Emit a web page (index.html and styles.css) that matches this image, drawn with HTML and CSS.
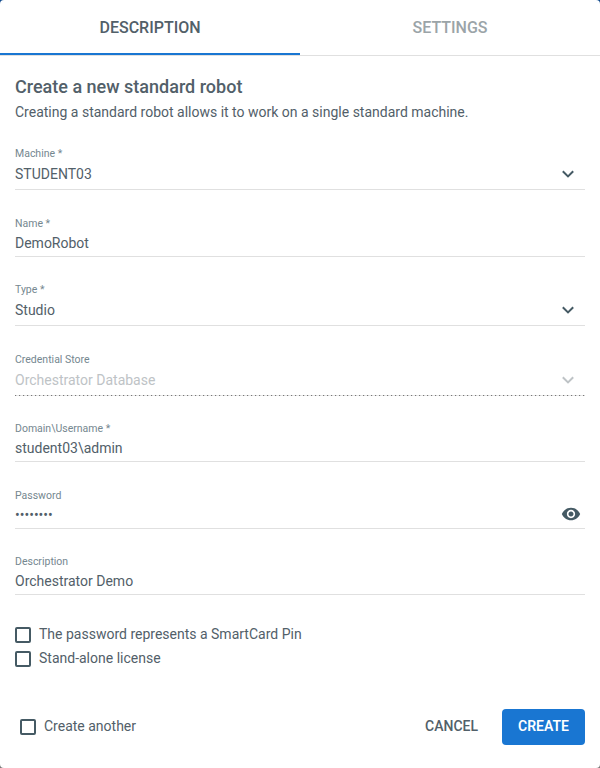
FILE: index.html
```html
<!DOCTYPE html>
<html lang="en">
<head>
<meta charset="utf-8">
<title>Create a new standard robot</title>
<link rel="stylesheet" href="styles.css">
</head>
<body>
<main class="dialog">
  <nav class="tabs">
    <div class="tab active"><span>DESCRIPTION</span></div>
    <div class="tab"><span>SETTINGS</span></div>
  </nav>
  <header class="intro">
    <h1><span>Create a new standard robot</span></h1>
    <p><span>Creating a standard robot allows it to work on a single standard machine.</span></p>
  </header>
  <form class="fields">
    <div class="field machine">
      <label>Machine *</label>
      <div class="value"><span>STUDENT03</span><svg class="chevron" viewBox="0 0 12 8"><path d="M.8 1.2 6 6.4l5.2-5.2"/></svg></div>
    </div>
    <div class="field name">
      <label>Name *</label>
      <div class="value"><span>DemoRobot</span></div>
    </div>
    <div class="field type">
      <label>Type *</label>
      <div class="value"><span>Studio</span><svg class="chevron" viewBox="0 0 12 8"><path d="M.8 1.2 6 6.4l5.2-5.2"/></svg></div>
    </div>
    <div class="field store disabled">
      <label>Credential Store</label>
      <div class="value"><span>Orchestrator Database</span><svg class="chevron" viewBox="0 0 12 8"><path d="M.8 1.2 6 6.4l5.2-5.2"/></svg></div>
    </div>
    <div class="field username">
      <label>Domain\Username *</label>
      <div class="value"><span>student03\admin</span></div>
    </div>
    <div class="field password">
      <label>Password</label>
      <div class="value"><span class="dots">••••••••</span><svg class="eye" viewBox="0 0 24 24"><path d="M12 4.5C7 4.5 2.73 7.61 1 12c1.73 4.39 6 7.5 11 7.5s9.27-3.11 11-7.5c-1.73-4.39-6-7.5-11-7.5zM12 17c-2.76 0-5-2.24-5-5s2.24-5 5-5 5 2.24 5 5-2.24 5-5 5zm0-8c-1.66 0-3 1.34-3 3s1.34 3 3 3 3-1.34 3-3-1.34-3-3-3z"/></svg></div>
    </div>
    <div class="field description">
      <label>Description</label>
      <div class="value"><span>Orchestrator Demo</span></div>
    </div>
  </form>
  <section class="options">
    <div class="check"><i class="box"></i><span>The password represents a SmartCard Pin</span></div>
    <div class="check"><i class="box"></i><span>Stand-alone license</span></div>
  </section>
  <footer class="actions">
    <div class="check"><i class="box"></i><span>Create another</span></div>
    <div class="buttons">
      <button class="cancel">CANCEL</button>
      <button class="create">CREATE</button>
    </div>
  </footer>
</main>
</body>
</html>
```
FILE: styles.css
```css
* { box-sizing: border-box; }
body { margin: 0; background: linear-gradient(#104a8c 50%, #777 50%); font-family: Roboto, sans-serif; color: #526069; }
.dialog { height: 768px; display: flex; flex-direction: column; background: #fff; border-radius: 4px; overflow: hidden; font-size: 14px; }
.tabs { display: flex; height: 56px; border-bottom: 1px solid #e0e0e0; }
.tab { flex: 1; height: 55px; display: flex; align-items: center; justify-content: center; font-size: 16px; font-weight: 500; color: #9ba4a8; }
.tab.active { color: #526069; padding-top: 2px; border-bottom: 2px solid #1976d2; }
.intro { height: 84px; padding: 20px 15px 0; }
h1 { margin: 0; font-size: 18px; line-height: 22px; font-weight: 500; }
p { margin: 4px 0 0; line-height: 20px; }
.fields { display: flex; flex-direction: column; padding: 0 15px; }
.field { display: flex; flex-direction: column; justify-content: flex-end; border-bottom: 1px solid #e0e0e0; }
.field label { font-size: 10.5px; line-height: 12px; color: #75878f; }
.value { display: flex; justify-content: space-between; align-items: center; height: 20px; }
.machine { height: 50px; padding-bottom: 5px; }
.machine label, .type label, .store label { margin-bottom: 4px; }
.name { height: 67px; padding-bottom: 3px; }
.name label, .username label, .password label, .description label { margin-bottom: 3px; }
.type { height: 69px; padding-bottom: 5px; }
.store { height: 70px; padding-bottom: 5px; }
.username { height: 66px; padding-bottom: 3px; }
.password { height: 67px; padding-bottom: 4px; }
.password label { margin-bottom: 2px; }
.dots { padding-top: 2px; }
.description { height: 66px; padding-bottom: 3px; }
.disabled { border-bottom: 0; padding-bottom: 6px; background: repeating-linear-gradient(to right, #777 0 1px, #d4d4d4 1px 2px, #e8e8e8 2px 4px) left bottom / 100% 1px no-repeat; }
.disabled .value { color: #bec3c6; }
.chevron { width: 12px; height: 8px; margin-right: 11px; fill: none; stroke: #455a64; stroke-width: 2; }
.disabled .chevron { stroke: #bec3c6; }
.eye { width: 20px; height: 20px; margin-right: 4px; fill: #455a64; }
.options { display: flex; flex-direction: column; gap: 4px; padding: 29px 15px 0; }
.check { display: flex; align-items: center; gap: 8px; height: 20px; }
.box { width: 16px; height: 16px; border: 2px solid #455a64; border-radius: 2px; margin-top: 2px; }
.actions { display: flex; align-items: center; justify-content: space-between; margin-top: auto; height: 83px; padding: 0 15px 0 20px; }
.actions .check { margin-bottom: 2px; }
.buttons { display: flex; gap: 8px; }
button { height: 36px; border: 0; border-radius: 4px; font: 500 14px Roboto, sans-serif; color: #526069; background: transparent; padding: 0 16px 2px; }
.create { width: 83px; color: #fff; background: #1976d2; font-weight: 600; }
```
